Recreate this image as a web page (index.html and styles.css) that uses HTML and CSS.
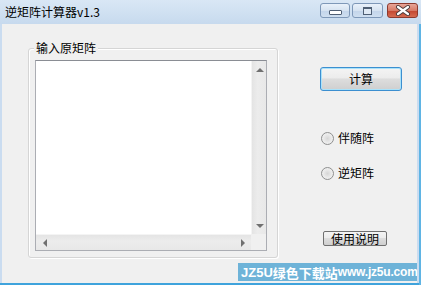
FILE: index.html
```html
<!DOCTYPE html>
<html>
<head>
  <meta charset="UTF-8">
  <title>逆矩阵计算器v1.3</title>
  <link rel="stylesheet" href="styles.css">
</head>
<body>
  <div class="window">
    <div class="titlebar">
      <span class="title">逆矩阵计算器v1.3</span>
      <div class="caption">
        <span class="cap capMin"><i></i></span>
        <span class="cap capMax"><i></i></span>
        <span class="cap capClose">
          <svg width="16" height="11" viewBox="0 0 16 11">
            <path d="M3 2 L13 9 M13 2 L3 9" stroke="#4a3a3a" stroke-width="4" stroke-linecap="round"/>
            <path d="M3 2 L13 9 M13 2 L3 9" stroke="#ffffff" stroke-width="2.2" stroke-linecap="round"/>
          </svg>
        </span>
      </div>
    </div>

    <div class="client">
      <div class="group">
        <span class="groupLabel">输入原矩阵</span>
        <div class="editor">
          <div class="editArea"></div>
          <div class="vscroll">
            <span class="sbtn"><i class="arrow up"></i></span>
            <span class="track"></span>
            <span class="sbtn"><i class="arrow down"></i></span>
          </div>
          <div class="hscroll">
            <span class="sbtn"><i class="arrow left"></i></span>
            <span class="track"></span>
            <span class="sbtn"><i class="arrow right"></i></span>
          </div>
          <div class="corner"></div>
        </div>
      </div>

      <div class="side">
        <button class="btn btnDefault">计算</button>
        <label class="radio first"><span class="dot"></span>伴随阵</label>
        <label class="radio"><span class="dot"></span>逆矩阵</label>
        <button class="btn btnSmall">使用说明</button>
      </div>
    </div>

    <div class="watermark"><span class="wmId">JZ5U</span><span class="wmCn">绿色下载站</span><span class="wmUrl">www.jz5u.com</span></div>
  </div>
</body>
</html>
```

FILE: styles.css
```css
body {
  margin: 0;
  padding: 0;
  width: 421px;
  height: 285px;
  overflow: hidden;
  font-family: "Noto Sans CJK SC", "DejaVu Sans", sans-serif;
  font-size: 12px;
  color: #000;
}
.window {
  position: relative;
  width: 421px;
  height: 285px;
  display: flex;
  flex-direction: column;
  background: #cadcf0;
  box-shadow: inset -2px 0 #5fb4e4, inset 0 -2px #3fa3dc;
}
.titlebar {
  height: 24px;
  display: flex;
  align-items: flex-start;
  background: linear-gradient(to bottom, #d9e7f5, #c7daee);
}
.title {
  margin: 3px 0 0 5px;
  line-height: 17px;
  font-size: 12px;
  flex: 1;
}
.caption {
  display: flex;
  margin: 3px 3px 0 0;
}
.cap {
  width: 30px;
  height: 15px;
  box-sizing: border-box;
  border: 1px solid #7e98b8;
  border-radius: 3px;
  display: flex;
  align-items: center;
  justify-content: center;
  background: linear-gradient(to bottom, #e9f1fa 0%, #d6e3f1 50%, #c3d5ea 51%, #cfdff0 100%);
}
.capMin { margin-right: 2px; }
.capMax { margin-right: 4px; width: 31px; }
.capMin i {
  display: block;
  width: 11px;
  height: 3px;
  margin-top: 4px;
  background: #fff;
  border: 1px solid #4f5f74;
  border-radius: 1px;
}
.capMax i {
  display: block;
  width: 7px;
  height: 5px;
  border: 1px solid #4f5f74;
  border-top-width: 2px;
  background: #dfe9f4;
}
.capClose {
  width: 31px;
  border-color: #8d3a2e;
  background: linear-gradient(to bottom, #e8a597 0%, #d77a66 50%, #c2452e 51%, #d66b50 100%);
}
.client {
  flex: 1;
  margin: 0 4px 2px 2px;
  background: #f0f0f0;
  display: flex;
  align-items: flex-start;
}
.group {
  position: relative;
  margin: 24px 0 0 26px;
  width: 250px;
  height: 210px;
  box-sizing: border-box;
  padding: 11px 10px 6px 6px;
  border: 1px solid #d5d5d5;
  border-radius: 3px;
  box-shadow: inset 1px 1px #ffffff, 1px 1px #ffffff;
}
.groupLabel {
  position: absolute;
  top: -9px;
  left: 5px;
  padding: 0 2px;
  background: #f0f0f0;
  line-height: 16px;
}
.editor {
  width: 232px;
  height: 191px;
  box-sizing: border-box;
  border: 1px solid #abadb3;
  border-top-color: #8a8d94;
  background: #fff;
  display: grid;
  grid-template-columns: 1fr 15px;
  grid-template-rows: 1fr 16px;
}
.vscroll {
  display: flex;
  flex-direction: column;
  background: linear-gradient(to right, #e4e4e4, #ececec 40%, #e8e8e8);
  border-left: 1px solid #f4f4f4;
}
.hscroll {
  display: flex;
  background: linear-gradient(to bottom, #e4e4e4, #ececec 40%, #e8e8e8);
  border-top: 1px solid #f4f4f4;
}
.track { flex: 1; }
.sbtn {
  width: 15px;
  height: 17px;
  display: flex;
  align-items: center;
  justify-content: center;
}
.hscroll .sbtn { width: 17px; height: 15px; }
.corner { background: #f0f0f0; }
.arrow {
  display: block;
  width: 0;
  height: 0;
  border-style: solid;
  border-color: transparent;
}
.arrow.up { border-width: 0 4px 4px 4px; border-bottom-color: #707070; }
.arrow.down { border-width: 4px 4px 0 4px; border-top-color: #707070; }
.arrow.left { border-width: 4px 4px 4px 0; border-right-color: #707070; }
.arrow.right { border-width: 4px 0 4px 4px; border-left-color: #707070; }
.side {
  display: flex;
  flex-direction: column;
  align-items: flex-start;
  margin: 43px 0 0 42px;
}
.btn {
  font-family: "Noto Sans CJK SC", "DejaVu Sans", sans-serif;
  font-size: 12px;
  color: #000;
  padding: 0;
  box-sizing: border-box;
  background: linear-gradient(to bottom, #f4f4f4 0%, #ececec 45%, #dddddd 50%, #cfcfcf 100%);
}
.btnDefault {
  width: 82px;
  height: 24px;
  border: 1px solid #3c8fd0;
  border-radius: 3px;
  box-shadow: inset 0 0 0 1px #a9e2fa;
  line-height: 20px;
}
.radio {
  display: flex;
  align-items: center;
  height: 16px;
  margin-top: 19px;
  margin-left: 1px;
  line-height: 16px;
}
.radio.first { margin-top: 39px; }
.dot {
  width: 13px;
  height: 13px;
  box-sizing: border-box;
  border: 1px solid #8e8f8f;
  border-radius: 50%;
  margin-right: 4px;
  background: radial-gradient(circle at 50% 50%, #d6d6d6 0%, #e8e8e8 45%, #f6f6f6 100%);
}
.btnSmall {
  width: 64px;
  height: 15px;
  margin: 50px 0 0 3px;
  border: 1px solid #707070;
  border-radius: 2px;
  line-height: 13px;
}
.watermark {
  position: absolute;
  left: 238px;
  top: 263px;
  width: 179px;
  height: 18px;
  box-sizing: border-box;
  padding-left: 3px;
  background: #6eb3d8;
  color: #fff;
  font-weight: bold;
  white-space: nowrap;
  overflow: hidden;
  display: flex;
  align-items: center;
}
.wmId {
  font-family: "Liberation Sans", sans-serif;
  font-size: 13px;
}
.wmCn {
  font-family: "Noto Sans CJK SC", sans-serif;
  font-size: 13px;
}
.wmUrl {
  font-family: "Liberation Sans", sans-serif;
  font-size: 12px;
  letter-spacing: -0.2px;
}
```
